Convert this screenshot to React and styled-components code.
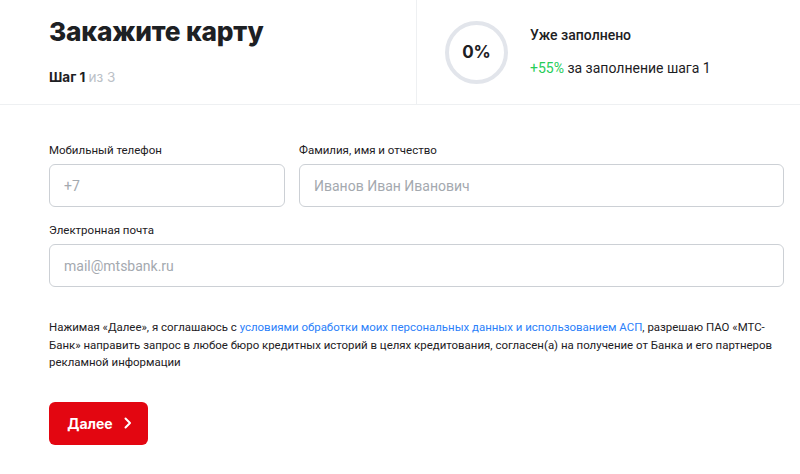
import React from 'react';
import styled, { createGlobalStyle } from 'styled-components';

const Global = createGlobalStyle`
  body {
    margin: 0;
    background: #fff;
    font-family: 'Roboto', 'Inter', sans-serif;
    color: #1d2023;
  }
`;

const Header = styled.div`
  display: grid;
  grid-template-columns: 417px 1fr;
  height: 104px;
  border-bottom: 1px solid #eef0f2;
`;

const TitleBox = styled.div`
  padding: 15px 0 0 49px;
  border-right: 1px solid #eef0f2;
`;

const Title = styled.h1`
  margin: 0;
  font-family: 'Inter', sans-serif;
  font-size: 26.3px;
  font-weight: 800;
  letter-spacing: -0.2px;
  line-height: 34px;
`;

const Step = styled.div`
  margin-top: 20px;
  font-family: 'Inter', sans-serif;
  font-size: 13.5px;
  font-weight: 700;
  span {
    font-weight: 400;
    color: #bbc1c7;
  }
`;

const Progress = styled.div`
  display: flex;
  align-items: center;
  gap: 22px;
  padding-left: 28px;
`;

const Ring = styled.div`
  width: 55px;
  height: 55px;
  border-radius: 50%;
  border: 4px solid #e2e5eb;
  display: flex;
  align-items: center;
  justify-content: center;
  font-family: 'Inter', sans-serif;
  font-size: 17px;
  font-weight: 700;
`;

const ProgressText = styled.div`
  display: flex;
  flex-direction: column;
  gap: 17px;
  font-size: 14px;
  margin-top: -2px;
`;

const Strong = styled.div`
  font-weight: 500;
`;

const Green = styled.span`
  color: #26cd58;
`;

const Form = styled.div`
  padding: 38px 16px 0 49px;
`;

const Row = styled.div`
  display: grid;
  grid-template-columns: ${p => p.$cols || '1fr'};
  gap: 14px;
  margin-bottom: 16px;
`;

const Field = styled.label`
  display: flex;
  flex-direction: column;
  gap: 7px;
  font-size: 11.5px;
  color: #1d2023;
`;

const Input = styled.input`
  height: 43px;
  box-sizing: border-box;
  border: 1.5px solid #ccd0d5;
  border-radius: 6px;
  padding: 0 14px;
  font-family: 'Roboto', sans-serif;
  font-size: 14px;
  color: #1d2023;
  outline: none;
  &::placeholder {
    color: #a4a9af;
  }
`;

const Agreement = styled.p`
  margin: 32px 0 0;
  font-size: 11.45px;
  line-height: 17.5px;
  color: #1d2023;
  a {
    color: #2b7ffa;
    text-decoration: none;
  }
`;

const Button = styled.button`
  margin-top: 30px;
  width: 99px;
  height: 43px;
  border: none;
  border-radius: 6px;
  background: #e30611;
  color: #fff;
  font-family: 'Inter', sans-serif;
  font-size: 14px;
  font-weight: 700;
  display: flex;
  align-items: center;
  justify-content: center;
  gap: 10px;
  padding: 0 0 0 2px;
`;

export default function App() {
  return (
    <>
      <Global />
      <Header>
        <TitleBox>
          <Title>Закажите карту</Title>
          <Step>Шаг 1 <span>из 3</span></Step>
        </TitleBox>
        <Progress>
          <Ring>0%</Ring>
          <ProgressText>
            <Strong>Уже заполнено</Strong>
            <div><Green>+55%</Green> за заполнение шага 1</div>
          </ProgressText>
        </Progress>
      </Header>
      <Form>
        <Row $cols="236px 1fr">
          <Field>
            Мобильный телефон
            <Input placeholder="+7" />
          </Field>
          <Field>
            Фамилия, имя и отчество
            <Input placeholder="Иванов Иван Иванович" />
          </Field>
        </Row>
        <Row>
          <Field>
            Электронная почта
            <Input placeholder="mail@mtsbank.ru" />
          </Field>
        </Row>
        <Agreement>
          Нажимая «Далее», я соглашаюсь с <a href="#">условиями обработки моих персональных данных и использованием АСП</a>, разрешаю ПАО «МТС-Банк» направить запрос в любое бюро кредитных историй в целях кредитования, согласен(а) на получение от Банка и его партнеров рекламной информации
        </Agreement>
        <Button>
          Далее
          <svg width="9" height="12" viewBox="0 0 9 12" fill="none">
            <path d="M2.5 1.5L7 6l-4.5 4.5" stroke="#fff" strokeWidth="2" strokeLinecap="round" strokeLinejoin="round" />
          </svg>
        </Button>
      </Form>
    </>
  );
}
